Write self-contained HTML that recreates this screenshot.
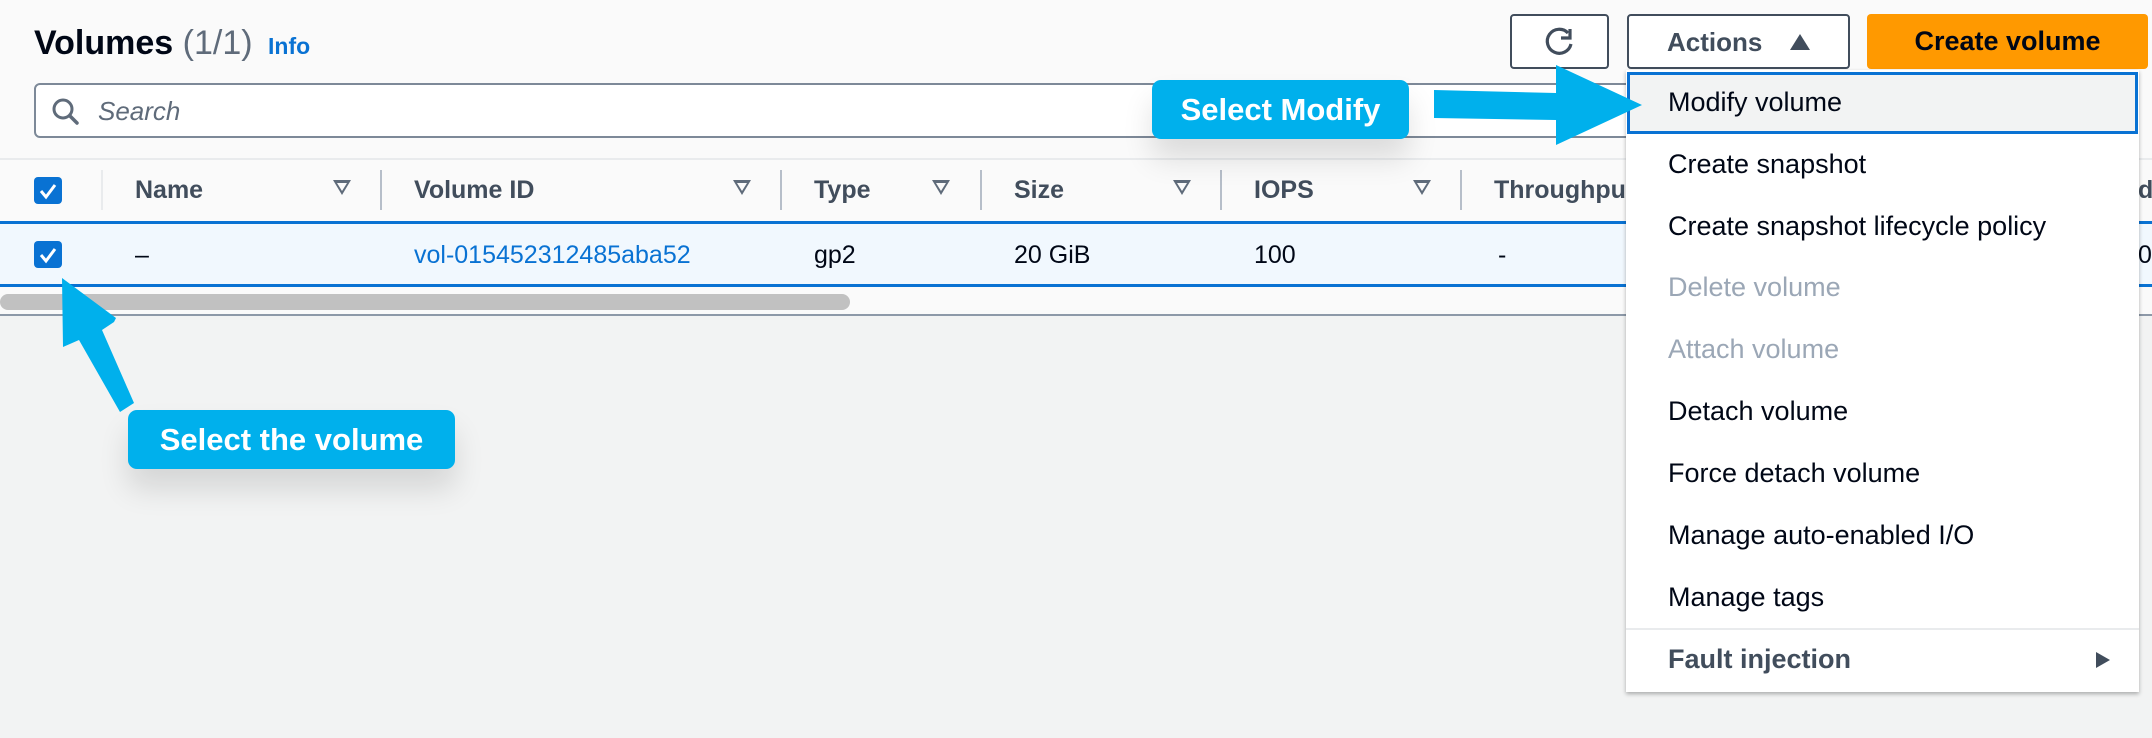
<!DOCTYPE html>
<html><head><meta charset="utf-8"><style>
*{box-sizing:border-box;margin:0;padding:0}
body{width:2152px;height:738px;overflow:hidden;background:#f2f3f3;font-family:"Liberation Sans",Arial,sans-serif;position:relative}
.top{position:absolute;left:0;top:0;width:2152px;height:316px;background:#fafafa;border-bottom:2px solid #8d99a8}
.abs{position:absolute}
.t{white-space:nowrap}
.hd{font-weight:bold;font-size:25px;color:#414d5c;top:176px}
.fi{top:180px;width:0;height:0;border-left:9px solid transparent;border-right:9px solid transparent;border-top:15px solid #5f6b7a}
.fi::after{content:"";position:absolute;left:-5px;top:-12px;border-left:5px solid transparent;border-right:5px solid transparent;border-top:8px solid #fafafa}
.sep{top:170px;width:2px;height:40px;background:#b6bec9}
.rv{font-size:25px;color:#000716;top:241px}
.cb{width:28px;height:27px;background:#0972d3;border-radius:4px}
.mi{position:absolute;left:1668px;font-size:27px;color:#000716;white-space:nowrap}
.dis{color:#9ba7b6}
.call{position:absolute;background:#00b0ec;color:#fff;font-weight:bold;border-radius:9px;box-shadow:0 20px 30px rgba(0,0,0,.12);font-size:31px;text-align:center}
</style></head><body>
<div class="top"></div>
<div class="abs t" style="left:34px;top:24px;font-size:34px;font-weight:bold;color:#000716">Volumes <span style="font-weight:normal;color:#5f6b7a">(1/1)</span> <span style="font-size:23px;color:#0972d3;font-weight:bold;margin-left:6px">Info</span></div>
<div class="abs" style="left:34px;top:83px;width:1600px;height:55px;background:#fff;border:2px solid #7d8998;border-radius:6px"></div>
<svg class="abs" style="left:50px;top:96px" width="32" height="32" viewBox="0 0 32 32"><circle cx="13" cy="13" r="9" fill="none" stroke="#5f6b7a" stroke-width="3"/><path d="M20 20l7 7" stroke="#5f6b7a" stroke-width="3.5" stroke-linecap="round"/></svg>
<div class="abs t" style="left:98px;top:96px;font-size:26px;font-style:italic;color:#5f6b7a">Search</div>
<div class="abs" style="left:0;top:158px;width:2152px;height:2px;background:#e9ebed"></div>
<div class="abs" style="left:0;top:221px;width:2152px;height:3px;background:#0972d3"></div>
<div class="abs" style="left:0;top:224px;width:2152px;height:60px;background:#f1f8fe"></div>
<div class="abs" style="left:0;top:284px;width:2152px;height:3px;background:#0972d3"></div>
<div class="abs" style="left:0;top:294px;width:850px;height:16px;background:#c1c1c1;border-radius:8px"></div>
<div class="abs cb" style="left:34px;top:177px"></div>
<div class="abs cb" style="left:34px;top:241px"></div>
<svg class="abs" style="left:34px;top:177px" width="28" height="27"><path d="M7 14l5 6 9-12" fill="none" stroke="#fff" stroke-width="3"/></svg>
<svg class="abs" style="left:34px;top:241px" width="28" height="27"><path d="M7 14l5 6 9-12" fill="none" stroke="#fff" stroke-width="3"/></svg>
<div class="abs sep" style="left:101px;background:#e9ebed"></div>
<div class="abs hd t" style="left:135px">Name</div><div class="abs fi" style="left:333px"></div><div class="abs sep" style="left:380px"></div>
<div class="abs hd t" style="left:414px">Volume ID</div><div class="abs fi" style="left:733px"></div><div class="abs sep" style="left:780px"></div>
<div class="abs hd t" style="left:814px">Type</div><div class="abs fi" style="left:932px"></div><div class="abs sep" style="left:980px"></div>
<div class="abs hd t" style="left:1014px">Size</div><div class="abs fi" style="left:1173px"></div><div class="abs sep" style="left:1220px"></div>
<div class="abs hd t" style="left:1254px">IOPS</div><div class="abs fi" style="left:1413px"></div><div class="abs sep" style="left:1460px"></div>
<div class="abs hd t" style="left:1494px">Throughput</div>
<div class="abs hd t" style="left:2138px">d</div>
<div class="abs rv t" style="left:135px">–</div>
<div class="abs rv t" style="left:414px;color:#0972d3">vol-015452312485aba52</div>
<div class="abs rv t" style="left:814px">gp2</div>
<div class="abs rv t" style="left:1014px">20 GiB</div>
<div class="abs rv t" style="left:1254px">100</div>
<div class="abs rv t" style="left:1498px">-</div>
<div class="abs rv t" style="left:2138px">0</div>
<!-- buttons -->
<div class="abs" style="left:1510px;top:14px;width:99px;height:55px;background:#fff;border:2px solid #414d5c;border-radius:4px"></div>
<svg class="abs" style="left:1542px;top:24px" width="36" height="36" viewBox="0 0 36 36"><path d="M26 9A12 12 0 1 0 29 20" fill="none" stroke="#414d5c" stroke-width="3.2"/><path d="M28 5v9h-9" fill="none" stroke="#414d5c" stroke-width="3.2"/></svg>
<div class="abs" style="left:1627px;top:14px;width:223px;height:55px;background:#fff;border:2px solid #414d5c;border-radius:4px"></div>
<div class="abs t" style="left:1667px;top:27px;font-size:26px;font-weight:bold;color:#414d5c">Actions</div>
<div class="abs" style="left:1790px;top:34px;width:0;height:0;border-left:10px solid transparent;border-right:10px solid transparent;border-bottom:16px solid #414d5c"></div>
<div class="abs" style="left:1867px;top:14px;width:281px;height:55px;background:#ff9900;border-radius:4px"></div>
<div class="abs t" style="left:1867px;top:26px;width:281px;text-align:center;font-size:27px;font-weight:bold;color:#000716">Create volume</div>
<!-- dropdown -->
<div class="abs" style="left:1626px;top:70px;width:513px;height:622px;background:#fff;box-shadow:0 2px 4px rgba(0,0,0,.3)"></div>
<div class="abs" style="left:1627px;top:72px;width:511px;height:62px;background:#f2f3f3;border:3px solid #0972d3"></div>
<div class="mi" style="top:87px">Modify volume</div>
<div class="mi" style="top:149px">Create snapshot</div>
<div class="mi" style="top:211px">Create snapshot lifecycle policy</div>
<div class="mi dis" style="top:272px">Delete volume</div>
<div class="mi dis" style="top:334px">Attach volume</div>
<div class="mi" style="top:396px">Detach volume</div>
<div class="mi" style="top:458px">Force detach volume</div>
<div class="mi" style="top:520px">Manage auto-enabled I/O</div>
<div class="mi" style="top:582px">Manage tags</div>
<div class="abs" style="left:1626px;top:628px;width:513px;height:2px;background:#e9ebed"></div>
<div class="mi" style="top:644px;font-weight:bold;color:#414d5c">Fault injection</div>
<div class="abs" style="left:2096px;top:652px;width:0;height:0;border-top:8px solid transparent;border-bottom:8px solid transparent;border-left:14px solid #414d5c"></div>
<!-- callouts -->
<div class="call" style="left:1152px;top:80px;width:257px;height:59px;line-height:59px">Select Modify</div>
<svg class="abs" style="left:1430px;top:60px" width="220" height="90"><path d="M4 30L126 33L126 5L212 45L126 85L126 60L4 58Z" fill="#00b0ec"/></svg>
<div class="call" style="left:128px;top:410px;width:327px;height:59px;line-height:59px">Select the volume</div>
<svg class="abs" style="left:0;top:0" width="200" height="420"><path d="M62 278L116 318L114 322L102 330L134 403L120 412L79 340L63 347Z" fill="#00b0ec"/></svg>
</body></html>
